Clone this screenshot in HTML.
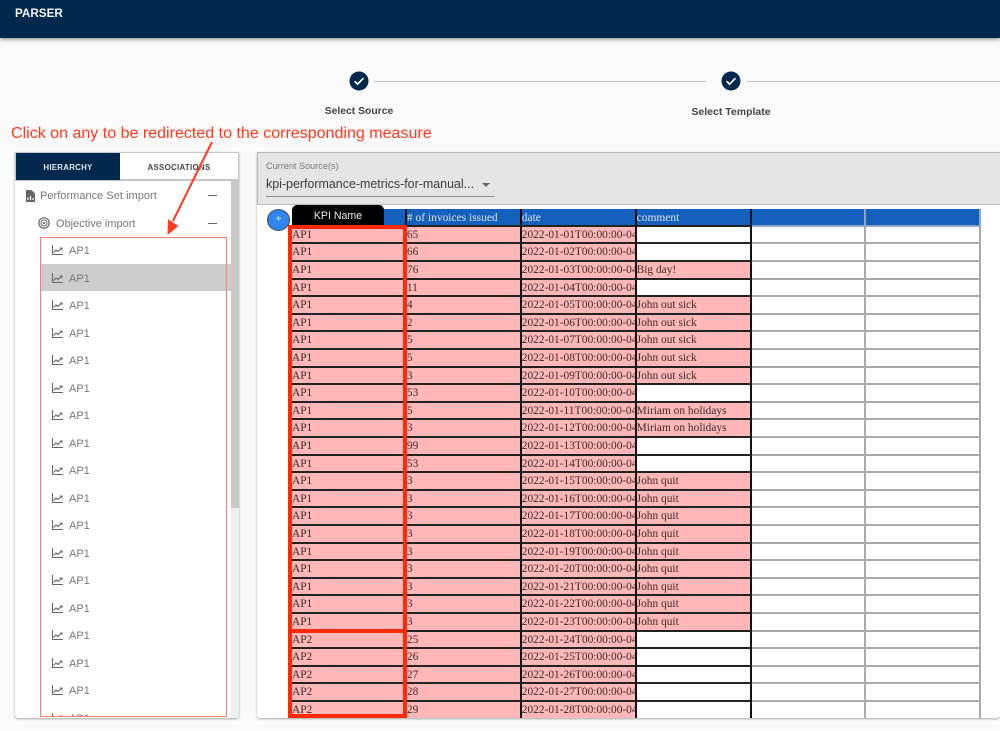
<!DOCTYPE html>
<html><head><meta charset="utf-8"><style>
html,body{margin:0;padding:0}
body{width:1000px;height:731px;overflow:hidden;background:#fafafa;position:relative;font-family:"Liberation Sans",sans-serif}
.a{position:absolute;white-space:nowrap}
.nav{left:0;top:0;width:1000px;height:38px;background:#00284d;box-shadow:0 1px 4px rgba(0,0,0,.5)}
.line{height:1px;background:#c4c4c4;top:81px}
.step{font-weight:bold;font-size:10.35px;color:#444;top:106px;text-align:center;width:160px}
.panel{background:#fff;box-shadow:0 1px 2px rgba(0,0,0,.35);border-radius:0 0 3px 3px}
.it{left:69px;font-size:11px;color:#777;line-height:14px;margin-top:1px}
.grid{display:grid;grid-template-columns:repeat(6,114.9px);grid-auto-rows:17.6px;font:11.4px/15px "Liberation Serif",serif;color:#3b2b2b}
.grid span{display:block;box-sizing:border-box;background:#ffb7b7;border-right:2px solid #111;border-bottom:2px solid #222;padding:1px 0 0 0;overflow:hidden;white-space:nowrap}
.grid span.h{background:#1560bd;color:#d8e4f5;letter-spacing:.03px;padding-top:2px;line-height:14px}
.grid span.w{background:#fff}
.grid span.g{background:#fff;border-color:#aaa}
.grid span.gh{background:#1560bd;border-color:#8fa6c4}
</style></head><body>
<div class="a nav"></div>
<div class="a" style="left:15px;top:6px;color:#f2f4f7;font-weight:bold;font-size:11.7px;line-height:15px">PARSER</div>

<svg class="a" style="left:349px;top:71px" width="20" height="20" viewBox="0 0 20 20"><circle cx="10" cy="10" r="9.5" fill="#00284d"/><path d="M5.6 10.2l3 3 5.8-6" fill="none" stroke="#fff" stroke-width="1.7"/></svg>
<svg class="a" style="left:721px;top:71px" width="20" height="20" viewBox="0 0 20 20"><circle cx="10" cy="10" r="9.5" fill="#00284d"/><path d="M5.6 10.2l3 3 5.8-6" fill="none" stroke="#fff" stroke-width="1.7"/></svg>
<div class="a line" style="left:374px;width:332px"></div>
<div class="a line" style="left:747px;width:253px"></div>
<div class="a step" style="left:279px">Select Source</div>
<div class="a step" style="left:651px;font-size:10.5px">Select Template</div>

<!-- left panel -->
<div class="a panel" style="left:15px;top:152px;width:224px;height:566px;overflow:hidden">
  <div class="a" style="left:216px;top:29px;width:8px;height:537px;background:#f0f0f0"></div>
  <div class="a" style="left:216px;top:29px;width:8px;height:327px;background:#c9c9c9"></div>
  <div class="a" style="left:26px;top:112px;width:190px;height:27px;background:#cdcdcd"></div>
  <div class="a" style="left:0;top:0;width:224px;height:29px;background:#fff;box-sizing:border-box;border:1px solid #c6c6c6;border-bottom-width:2px"></div>
  <div class="a" style="left:1px;top:1px;width:104px;height:27px;background:#00284d"></div>
  <div class="a" style="left:1px;top:10px;width:104px;text-align:center;color:#dfe5ec;font-weight:bold;font-size:7.9px;letter-spacing:.25px;line-height:11px">HIERARCHY</div>
  <div class="a" style="left:105px;top:10px;width:118px;text-align:center;color:#444;font-weight:bold;font-size:7.9px;letter-spacing:.3px;line-height:11px">ASSOCIATIONS</div>
</div>
<svg class="a" style="left:26px;top:190px" width="9" height="12" viewBox="0 0 9 12"><path d="M0 0H5.5L9 3.5V12H0Z" fill="#666"/><path d="M2 10V7.5M4.5 10V6M7 10V8" stroke="#fff" stroke-width="1.2"/></svg>
<div class="a" style="left:40px;top:189px;font-size:11px;color:#777;letter-spacing:.03px;line-height:14px">Performance Set import</div>
<div class="a" style="left:208px;top:195px;width:9px;height:1px;background:#666"></div>
<svg class="a" style="left:38px;top:217px" width="12" height="12" viewBox="0 0 12 12" fill="none" stroke="#666"><circle cx="6" cy="6" r="5.2" stroke-width="1.2"/><circle cx="6" cy="6" r="3" stroke-width="1"/><circle cx="6" cy="6" r="1.1" fill="#666" stroke="none"/></svg>
<div class="a" style="left:56px;top:217px;font-size:11px;color:#777;line-height:14px">Objective import</div>
<div class="a" style="left:208px;top:223px;width:9px;height:1px;background:#666"></div>

<div class="a" style="left:41px;top:238px;width:186px;height:478px;overflow:hidden">
<svg width="0" height="0" style="position:absolute"><symbol id="ch" viewBox="0 0 11 10"><path d="M.5 0V9.5H11" fill="none" stroke="#666"/><path d="M1.5 7.5L4 5l2 1.5L9 3.5" fill="none" stroke="#666" stroke-width="1.1"/><path d="M7.5 2.5H10.5V5.5Z" fill="#666"/></symbol></svg>
<svg class="a" style="left:11px;top:7px" width="11" height="10"><use href="#ch"/></svg><div class="a it" style="left:28px;top:5px">AP1</div>
<svg class="a" style="left:11px;top:35px" width="11" height="10"><use href="#ch"/></svg><div class="a it" style="left:28px;top:33px">AP1</div>
<svg class="a" style="left:11px;top:62px" width="11" height="10"><use href="#ch"/></svg><div class="a it" style="left:28px;top:60px">AP1</div>
<svg class="a" style="left:11px;top:90px" width="11" height="10"><use href="#ch"/></svg><div class="a it" style="left:28px;top:88px">AP1</div>
<svg class="a" style="left:11px;top:117px" width="11" height="10"><use href="#ch"/></svg><div class="a it" style="left:28px;top:115px">AP1</div>
<svg class="a" style="left:11px;top:145px" width="11" height="10"><use href="#ch"/></svg><div class="a it" style="left:28px;top:143px">AP1</div>
<svg class="a" style="left:11px;top:172px" width="11" height="10"><use href="#ch"/></svg><div class="a it" style="left:28px;top:170px">AP1</div>
<svg class="a" style="left:11px;top:200px" width="11" height="10"><use href="#ch"/></svg><div class="a it" style="left:28px;top:198px">AP1</div>
<svg class="a" style="left:11px;top:227px" width="11" height="10"><use href="#ch"/></svg><div class="a it" style="left:28px;top:225px">AP1</div>
<svg class="a" style="left:11px;top:255px" width="11" height="10"><use href="#ch"/></svg><div class="a it" style="left:28px;top:253px">AP1</div>
<svg class="a" style="left:11px;top:282px" width="11" height="10"><use href="#ch"/></svg><div class="a it" style="left:28px;top:280px">AP1</div>
<svg class="a" style="left:11px;top:310px" width="11" height="10"><use href="#ch"/></svg><div class="a it" style="left:28px;top:308px">AP1</div>
<svg class="a" style="left:11px;top:337px" width="11" height="10"><use href="#ch"/></svg><div class="a it" style="left:28px;top:335px">AP1</div>
<svg class="a" style="left:11px;top:365px" width="11" height="10"><use href="#ch"/></svg><div class="a it" style="left:28px;top:363px">AP1</div>
<svg class="a" style="left:11px;top:392px" width="11" height="10"><use href="#ch"/></svg><div class="a it" style="left:28px;top:390px">AP1</div>
<svg class="a" style="left:11px;top:420px" width="11" height="10"><use href="#ch"/></svg><div class="a it" style="left:28px;top:418px">AP1</div>
<svg class="a" style="left:11px;top:447px" width="11" height="10"><use href="#ch"/></svg><div class="a it" style="left:28px;top:445px">AP1</div>
<svg class="a" style="left:11px;top:475px" width="11" height="10"><use href="#ch"/></svg><div class="a it" style="left:28px;top:473px">AP1</div>
</div>
<div class="a" style="left:40px;top:237px;width:187px;height:480px;box-sizing:border-box;border:1px solid #ff7a68"></div>

<!-- right panel -->
<div class="a panel" style="left:257px;top:152px;width:743px;height:566px"></div>
<div class="a" style="left:257px;top:152px;width:743px;height:53px;box-sizing:border-box;background:#e5e5e5;border:1px solid #b9b9b9;border-right:0"></div>
<div class="a" style="left:266px;top:160px;font-size:9.1px;line-height:12px;color:#7a7a7a;letter-spacing:.02px">Current Source(s)</div>
<div class="a" style="left:266px;top:176px;font-size:12.45px;line-height:16px;color:#3c3c3c">kpi-performance-metrics-for-manual...</div>
<div class="a" style="left:266px;top:196px;width:229px;height:1px;background:#8e8e8e"></div>
<div class="a" style="left:482px;top:183px;width:0;height:0;border:4px solid transparent;border-top:4px solid #666;border-bottom:0"></div>

<div class="a" style="left:257px;top:205px;width:743px;height:513px;overflow:hidden">
<div class="a grid" style="left:35px;top:4.3px">
<span class="h">&nbsp;</span><span class="h"># of invoices issued</span><span class="h">date</span><span class="h">comment</span><span class="gh"></span><span class="gh"></span>
<span>AP1</span><span>65</span><span>2022-01-01T00:00:00-04:00</span><span class="w"></span><span class="g"></span><span class="g"></span>
<span>AP1</span><span>66</span><span>2022-01-02T00:00:00-04:00</span><span class="w"></span><span class="g"></span><span class="g"></span>
<span>AP1</span><span>76</span><span>2022-01-03T00:00:00-04:00</span><span>Big day!</span><span class="g"></span><span class="g"></span>
<span>AP1</span><span>11</span><span>2022-01-04T00:00:00-04:00</span><span class="w"></span><span class="g"></span><span class="g"></span>
<span>AP1</span><span>4</span><span>2022-01-05T00:00:00-04:00</span><span>John out sick</span><span class="g"></span><span class="g"></span>
<span>AP1</span><span>2</span><span>2022-01-06T00:00:00-04:00</span><span>John out sick</span><span class="g"></span><span class="g"></span>
<span>AP1</span><span>5</span><span>2022-01-07T00:00:00-04:00</span><span>John out sick</span><span class="g"></span><span class="g"></span>
<span>AP1</span><span>5</span><span>2022-01-08T00:00:00-04:00</span><span>John out sick</span><span class="g"></span><span class="g"></span>
<span>AP1</span><span>3</span><span>2022-01-09T00:00:00-04:00</span><span>John out sick</span><span class="g"></span><span class="g"></span>
<span>AP1</span><span>53</span><span>2022-01-10T00:00:00-04:00</span><span class="w"></span><span class="g"></span><span class="g"></span>
<span>AP1</span><span>5</span><span>2022-01-11T00:00:00-04:00</span><span>Miriam on holidays</span><span class="g"></span><span class="g"></span>
<span>AP1</span><span>3</span><span>2022-01-12T00:00:00-04:00</span><span>Miriam on holidays</span><span class="g"></span><span class="g"></span>
<span>AP1</span><span>99</span><span>2022-01-13T00:00:00-04:00</span><span class="w"></span><span class="g"></span><span class="g"></span>
<span>AP1</span><span>53</span><span>2022-01-14T00:00:00-04:00</span><span class="w"></span><span class="g"></span><span class="g"></span>
<span>AP1</span><span>3</span><span>2022-01-15T00:00:00-04:00</span><span>John quit</span><span class="g"></span><span class="g"></span>
<span>AP1</span><span>3</span><span>2022-01-16T00:00:00-04:00</span><span>John quit</span><span class="g"></span><span class="g"></span>
<span>AP1</span><span>3</span><span>2022-01-17T00:00:00-04:00</span><span>John quit</span><span class="g"></span><span class="g"></span>
<span>AP1</span><span>3</span><span>2022-01-18T00:00:00-04:00</span><span>John quit</span><span class="g"></span><span class="g"></span>
<span>AP1</span><span>3</span><span>2022-01-19T00:00:00-04:00</span><span>John quit</span><span class="g"></span><span class="g"></span>
<span>AP1</span><span>3</span><span>2022-01-20T00:00:00-04:00</span><span>John quit</span><span class="g"></span><span class="g"></span>
<span>AP1</span><span>3</span><span>2022-01-21T00:00:00-04:00</span><span>John quit</span><span class="g"></span><span class="g"></span>
<span>AP1</span><span>3</span><span>2022-01-22T00:00:00-04:00</span><span>John quit</span><span class="g"></span><span class="g"></span>
<span>AP1</span><span>3</span><span>2022-01-23T00:00:00-04:00</span><span>John quit</span><span class="g"></span><span class="g"></span>
<span>AP2</span><span>25</span><span>2022-01-24T00:00:00-04:00</span><span class="w"></span><span class="g"></span><span class="g"></span>
<span>AP2</span><span>26</span><span>2022-01-25T00:00:00-04:00</span><span class="w"></span><span class="g"></span><span class="g"></span>
<span>AP2</span><span>27</span><span>2022-01-26T00:00:00-04:00</span><span class="w"></span><span class="g"></span><span class="g"></span>
<span>AP2</span><span>28</span><span>2022-01-27T00:00:00-04:00</span><span class="w"></span><span class="g"></span><span class="g"></span>
<span>AP2</span><span>29</span><span>2022-01-28T00:00:00-04:00</span><span class="w"></span><span class="g"></span><span class="g"></span>
</div>
</div>

<!-- plus button -->
<div class="a" style="left:267px;top:209px;width:23px;height:22px;box-sizing:border-box;border-radius:50%;background:#2f86f2;border:1.5px solid #3c4a5c;color:#fff;font-size:10px;line-height:19px;text-align:center">+</div>
<!-- KPI tab -->
<div class="a" style="left:292px;top:205px;width:92px;height:21px;background:#000;border-radius:5px 5px 0 0;color:#eee;font-size:10.6px;line-height:23px;text-align:center">KPI Name</div>

<!-- red rects -->
<div class="a" style="left:288px;top:225px;width:119px;height:408px;box-sizing:border-box;border:4px solid #ff2a08"></div>
<div class="a" style="left:288px;top:629px;width:119px;height:89px;box-sizing:border-box;border:4px solid #ff2a08"></div>

<!-- annotation -->
<div class="a" style="left:11px;top:124px;font-size:16.05px;line-height:18px;color:#ff3a1c">Click on any to be redirected to the corresponding measure</div>
<svg class="a" style="left:160px;top:138px" width="60" height="100" viewBox="0 0 60 100"><path d="M52 4L13 83" stroke="#ff3a1c" stroke-width="2" fill="none"/><path d="M8 96L8.5 82L17.5 88Z" fill="#ff3a1c" stroke="#ff3a1c"/></svg>
</body></html>
